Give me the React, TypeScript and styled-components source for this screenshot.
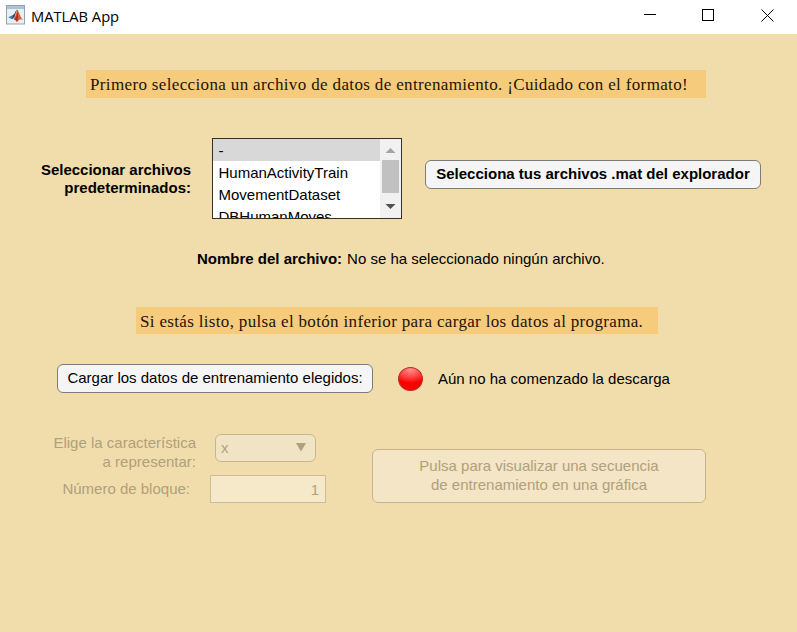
import React from "react";
import styled, { createGlobalStyle } from "styled-components";

const GlobalStyle = createGlobalStyle`
  * { box-sizing: border-box; }
  body { margin: 0; background: #f1ddab; }
`;

const Window = styled.div`
  width: 797px;
  height: 632px;
  display: flex;
  flex-direction: column;
  overflow: hidden;
  background: #f1ddab;
  color: #000;
  font: 15px/18px "Liberation Sans", Arial, sans-serif;
  white-space: nowrap;
`;

const TitleBar = styled.header`
  height: 34px;
  flex: none;
  display: flex;
  align-items: center;
  padding: 0 23px 4px 6px;
  background: #fff;
`;

const Title = styled.span`
  margin-left: 6px;
  padding-top: 2px;
  flex: 1;
  font: 14.7px/20px "Open Sans", "Noto Sans", sans-serif;
`;

const WindowControls = styled.div`
  display: flex;
  gap: 45px;
`;

const Row = styled.div<{ $top: number; $left: number }>`
  display: flex;
  align-items: flex-start;
  flex: none;
  margin-top: ${(p) => p.$top}px;
  padding-left: ${(p) => p.$left}px;
`;

const Banner = styled.div<{ $width: number; $height: number; $spacing: number }>`
  width: ${(p) => p.$width}px;
  height: ${(p) => p.$height}px;
  padding-left: 4px;
  background: #f6cb7b;
  color: #1d1408;
  font: 17px/29px Georgia, "Liberation Serif", serif;
  letter-spacing: ${(p) => p.$spacing}px;
`;

const Label = styled.label<{ $width?: number; $top?: number; $bold?: boolean; $muted?: boolean; $line?: number }>`
  width: ${(p) => (p.$width ? `${p.$width}px` : "auto")};
  margin-top: ${(p) => p.$top ?? 0}px;
  text-align: right;
  font-weight: ${(p) => (p.$bold ? 700 : 400)};
  color: ${(p) => (p.$muted ? "#b0a07c" : "#000")};
  line-height: ${(p) => p.$line ?? 18}px;
`;

const ListBox = styled.div`
  width: 190px;
  height: 81px;
  margin-left: 21px;
  display: flex;
  border: 1px solid #3a3022;
  background: #fff;
  overflow: hidden;
`;

const Options = styled.div`
  flex: 1;
  overflow: hidden;
`;

const Option = styled.div<{ $selected?: boolean }>`
  height: 22px;
  padding-left: 5.5px;
  line-height: 24px;
  background: ${(p) => (p.$selected ? "#d8d8d8" : "transparent")};
`;

const ScrollBar = styled.div`
  width: 21px;
  display: flex;
  flex-direction: column;
  align-items: center;
  background: #f1f1f1;
`;

const ScrollThumb = styled.div`
  width: 17px;
  height: 33px;
  background: #c1c1c1;
`;

const Button = styled.button<{ $width: number; $height?: number; $left?: number; $top?: number; $bold?: boolean }>`
  width: ${(p) => p.$width}px;
  height: ${(p) => p.$height ?? 29}px;
  margin: ${(p) => p.$top ?? 0}px 0 0 ${(p) => p.$left ?? 0}px;
  padding: 0 0 2px;
  border: 1px solid #7d7b77;
  border-radius: 6px;
  background: #f5f5f5;
  color: #000;
  font: ${(p) => (p.$bold ? 700 : 400)} 15px/19px "Liberation Sans", Arial, sans-serif;
  white-space: pre-line;

  &:disabled {
    border-color: #c6b58e;
    background: #f3e5c5;
    color: #b0a07c;
  }
`;

const Status = styled.span`
  margin: 6px 0 0 15px;
`;

const Lamp = styled.div`
  width: 25px;
  height: 24px;
  margin: 3px 0 0 25px;
  border: 1.5px solid #b9362b;
  border-radius: 50%;
  background: radial-gradient(ellipse 85% 60% at 50% 8%, #ff8d8d 0%, #ff4545 55%, rgba(255, 0, 0, 0) 100%), #fa0000;
`;

const Value = styled.span`
  margin-left: 5px;
`;

const Form = styled.div`
  width: 326px;
`;

const DropDown = styled.div`
  width: 101px;
  height: 28px;
  margin: 1px 0 0 19px;
  padding: 0 9px 0 5px;
  display: flex;
  align-items: center;
  justify-content: space-between;
  border: 1px solid #c6b58e;
  border-radius: 6px;
  background: #f1e4c5;
  color: #b0a07c;

  svg {
    margin-bottom: 2px;
  }
`;

const NumberField = styled.div`
  width: 116px;
  height: 28px;
  margin-left: 20px;
  padding-right: 6px;
  border: 1px solid #cdbd96;
  background: #f6e9ca;
  color: #b0a07c;
  line-height: 28px;
  text-align: right;
`;

const MatlabIcon = () => (
  <svg width="19" height="20" viewBox="0 0 19 20">
    <rect x="0.5" y="0.5" width="18" height="18.5" fill="#e9eef2" stroke="#8fa5b7" />
    <rect x="1" y="1" width="17" height="3" fill="#a8c4d9" />
    <path d="M2.3 12.2 7 10l1.5 1.5L6 14.3Z" fill="#3480b5" />
    <path d="M7 10c2-1 2.3-4 4-5.5L8.5 12 6 14.3Z" fill="#244b78" />
    <path d="M11 4.5c1.6 1 2.8 7 6 10.5-2-1.5-3.4-1-6 2-1-2-2-3-4-3 2-1 3-4 4-9.5Z" fill="#dc602c" />
    <path d="M11 4.5c.7 3.5-.2 7.5-3 10 1.3.2 2 1 3 2.5 1.4-3 1.5-8 0-12.5Z" fill="#a83222" />
  </svg>
);

const Arrow = ({ up = false }: { up?: boolean }) => (
  <svg width="17" height="21" viewBox="0 0 17 21">
    <path d={up ? "M3.5 14 8.5 9l5 5Z" : "M3.5 11h10l-5 5Z"} fill={up ? "#a3a3a3" : "#505050"} />
  </svg>
);

export default function App() {
  return (
    <>
      <GlobalStyle />
      <Window>
        <TitleBar>
          <MatlabIcon />
          <Title>MATLAB App</Title>
          <WindowControls>
            <svg width="13" height="13"><path d="M0 5.5h12" stroke="#000" /></svg>
            <svg width="14" height="13"><rect x=".5" y=".5" width="11" height="11" fill="none" stroke="#000" /></svg>
            <svg width="13" height="13"><path d="m.5.5 12 12m0-12-12 12" stroke="#000" /></svg>
          </WindowControls>
        </TitleBar>

        <Row $top={36} $left={86}>
          <Banner $width={620} $height={28} $spacing={0.355}>
            Primero selecciona un archivo de datos de entrenamiento. ¡Cuidado con el formato!
          </Banner>
        </Row>

        <Row $top={40} $left={31}>
          <Label $width={160} $top={23} $bold>
            Seleccionar archivos
            <br />
            predeterminados:
          </Label>
          <ListBox>
            <Options>
              <Option $selected>-</Option>
              <Option>HumanActivityTrain</Option>
              <Option>MovementDataset</Option>
              <Option>DBHumanMoves</Option>
            </Options>
            <ScrollBar>
              <Arrow up />
              <ScrollThumb />
              <Arrow />
            </ScrollBar>
          </ListBox>
          <Button $width={336} $left={23} $top={22} $bold>
            Selecciona tus archivos .mat del explorador
          </Button>
        </Row>

        <Row $top={31} $left={197}>
          <Label $bold>Nombre del archivo:</Label>
          <Value>No se ha seleccionado ningún archivo.</Value>
        </Row>

        <Row $top={39} $left={136}>
          <Banner $width={522} $height={27} $spacing={0.335}>
            Si estás listo, pulsa el botón inferior para cargar los datos al programa.
          </Banner>
        </Row>

        <Row $top={30} $left={57}>
          <Button $width={316}>Cargar los datos de entrenamiento elegidos:</Button>
          <Lamp />
          <Status>Aún no ha comenzado la descarga</Status>
        </Row>

        <Row $top={40} $left={0}>
          <Form>
            <Row $top={0} $left={36}>
              <Label $width={160} $muted $line={19}>
                Elige la característica
                <br />
                a representar:
              </Label>
              <DropDown>
                x
                <svg width="10" height="10"><path d="M0 1h10L5 9.5Z" fill="#b0a07c" /></svg>
              </DropDown>
            </Row>
            <Row $top={4} $left={40}>
              <Label $width={150} $top={5} $muted>Número de bloque:</Label>
              <NumberField>1</NumberField>
            </Row>
          </Form>
          <Button $width={334} $height={54} $left={46} $top={16} disabled>
            {"Pulsa para visualizar una secuencia\nde entrenamiento en una gráfica"}
          </Button>
        </Row>
      </Window>
    </>
  );
}
